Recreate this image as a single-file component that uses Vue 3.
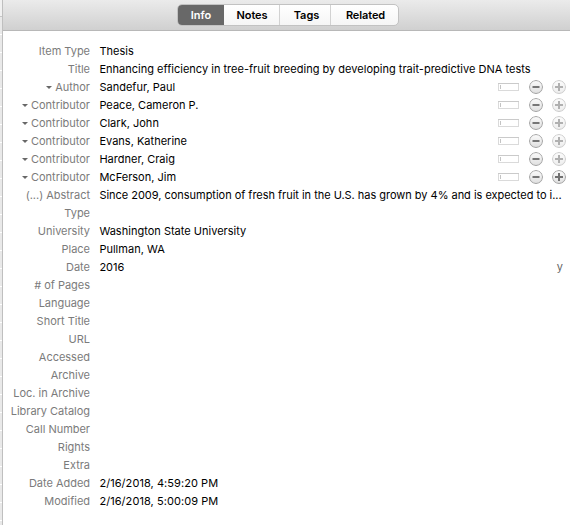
<script setup>
const tabs = [
  { name: 'Info', cls: 'info', active: true },
  { name: 'Notes', cls: 'notes' },
  { name: 'Tags', cls: 'tags' },
  { name: 'Related', cls: 'related' },
]
const fields = [
  { label: 'Item Type', value: 'Thesis' },
  { label: 'Title', value: 'Enhancing efficiency in tree-fruit breeding by developing trait-predictive DNA tests' },
  { label: 'Author', value: 'Sandefur, Paul', creator: true },
  { label: 'Contributor', value: 'Peace, Cameron P.', creator: true },
  { label: 'Contributor', value: 'Clark, John', creator: true },
  { label: 'Contributor', value: 'Evans, Katherine', creator: true },
  { label: 'Contributor', value: 'Hardner, Craig', creator: true },
  { label: 'Contributor', value: 'McFerson, Jim', creator: true, canAdd: true },
  { label: '(...) Abstract', value: 'Since 2009, consumption of fresh fruit in the U.S. has grown by 4% and is expected to i...', fit: 'tight' },
  { label: 'Type', value: '' },
  { label: 'University', value: 'Washington State University' },
  { label: 'Place', value: 'Pullman, WA' },
  { label: 'Date', value: '2016', hint: 'y' },
  { label: '# of Pages', value: '' },
  { label: 'Language', value: '' },
  { label: 'Short Title', value: '' },
  { label: 'URL', value: '' },
  { label: 'Accessed', value: '' },
  { label: 'Archive', value: '' },
  { label: 'Loc. in Archive', value: '' },
  { label: 'Library Catalog', value: '' },
  { label: 'Call Number', value: '' },
  { label: 'Rights', value: '' },
  { label: 'Extra', value: '' },
  { label: 'Date Added', value: '2/16/2018, 4:59:20 PM', fit: 'loose' },
  { label: 'Modified', value: '2/16/2018, 5:00:09 PM', fit: 'loose' },
]
</script>

<template>
  <div class="window">
    <div class="splitter"><div class="list-head"></div></div>
    <div class="pane">
      <header class="toolbar">
        <nav class="tabs">
          <button v-for="t in tabs" :key="t.name" class="tab" :class="[t.cls, { active: t.active }]">{{ t.name }}</button>
        </nav>
      </header>
      <main class="fields">
        <div v-for="(f, i) in fields" :key="i" class="row">
          <div class="label">
            <svg v-if="f.creator" class="arrow" width="6" height="3" viewBox="0 0 6 3"><path d="M0 0H6L3 3Z" fill="#686868" /></svg>
            <span>{{ f.label }}</span>
          </div>
          <div class="value" :class="f.fit">{{ f.value }}</div>
          <div v-if="f.creator" class="controls">
            <svg class="mode" width="21" height="8" viewBox="0 0 21 8">
              <rect x=".5" y=".5" width="20" height="7" fill="#fff" stroke="#dadada" />
              <path d="M0 .5H21" stroke="#cacaca" />
              <path d="M2.5 2V6" stroke="#c4c4c4" />
            </svg>
            <svg class="round" width="14" height="14" viewBox="0 0 14 14">
              <circle cx="7" cy="7" r="6.5" fill="none" stroke="#a0a0a0" />
              <path d="M3.5 7H10.5" stroke="#767676" stroke-width="2" />
            </svg>
            <svg class="round" :class="{ disabled: !f.canAdd }" width="14" height="14" viewBox="0 0 14 14">
              <circle cx="7" cy="7" r="6.5" fill="none" stroke="#a0a0a0" />
              <path d="M3 7H11M7 3V11" stroke="#707070" stroke-width="2" />
            </svg>
          </div>
          <div v-if="f.hint" class="hint">{{ f.hint }}</div>
        </div>
      </main>
    </div>
  </div>
</template>

<style>
body { margin: 0; overflow: hidden; }
</style>

<style scoped>
.window {
  display: flex;
  width: 570px;
  height: 525px;
  background: #fff;
  font: 11px/18px Inter, "Liberation Sans", sans-serif;
  color: #000;
  overflow: hidden;
}
.splitter {
  box-sizing: border-box;
  width: 3px;
  flex: none;
  border-right: 1px solid #bfbfbf;
  background: repeating-linear-gradient(#e9e9e9 0 16px, #fff 16px 17px, #e9e9e9 17px 18px);
}
.list-head {
  box-sizing: border-box;
  height: 17px;
  border-bottom: 1px solid #c6c6c6;
  background: #f1f1f1;
}
.pane { flex: 1; min-width: 0; }
.toolbar {
  box-sizing: border-box;
  height: 31px;
  padding: 4px 0 0 174px;
  border-bottom: 1px solid #b8b8b8;
  background: linear-gradient(#ebebeb, #d0d0d0);
}
.tabs {
  display: flex;
  box-sizing: border-box;
  width: 222px;
  height: 22px;
  border: 1px solid #c2c2c2;
  border-radius: 5px;
  background: linear-gradient(#fff, #f5f5f5);
  overflow: hidden;
}
.tab {
  box-sizing: border-box;
  padding: 0 0 0 1px;
  border: 0;
  border-right: 1px solid #d2d2d2;
  background: none;
  font: 600 11px/20px Inter, "Liberation Sans", sans-serif;
  color: #000;
}
.tab.info { width: 46px; margin-left: 0; }
.tab.notes { width: 56px; letter-spacing: -0.1px; }
.tab.tags { width: 51px; padding-left: 3px; }
.tab.related { width: 67px; border-right: 0; padding-left: 2px; letter-spacing: -0.1px; }
.tab.active { background: #686868; border-color: #686868; color: #fff; }
.fields { padding-top: 11px; }
.row { display: flex; height: 18px; white-space: nowrap; }
.label {
  display: flex;
  align-items: center;
  justify-content: flex-end;
  width: 87px;
  flex: none;
  color: #7b7b7b;
}
.label span { letter-spacing: -0.02px; }
.arrow { margin: 1px 3px 0 0; }
.value { flex: 1; min-width: 0; padding-left: 9.4px; letter-spacing: 0.012px; }
.value.tight { letter-spacing: -0.026px; }
.value.loose { letter-spacing: 0.06px; }
.controls { display: flex; align-items: center; padding-right: 4px; }
.mode { margin-right: 10px; }
.round {
  border-radius: 50%;
  background: linear-gradient(#fcfcfc, #dedede);
}
.round + .round { margin-left: 9px; }
.disabled { opacity: .55; }
.hint { padding-right: 7px; color: #666; }
</style>
